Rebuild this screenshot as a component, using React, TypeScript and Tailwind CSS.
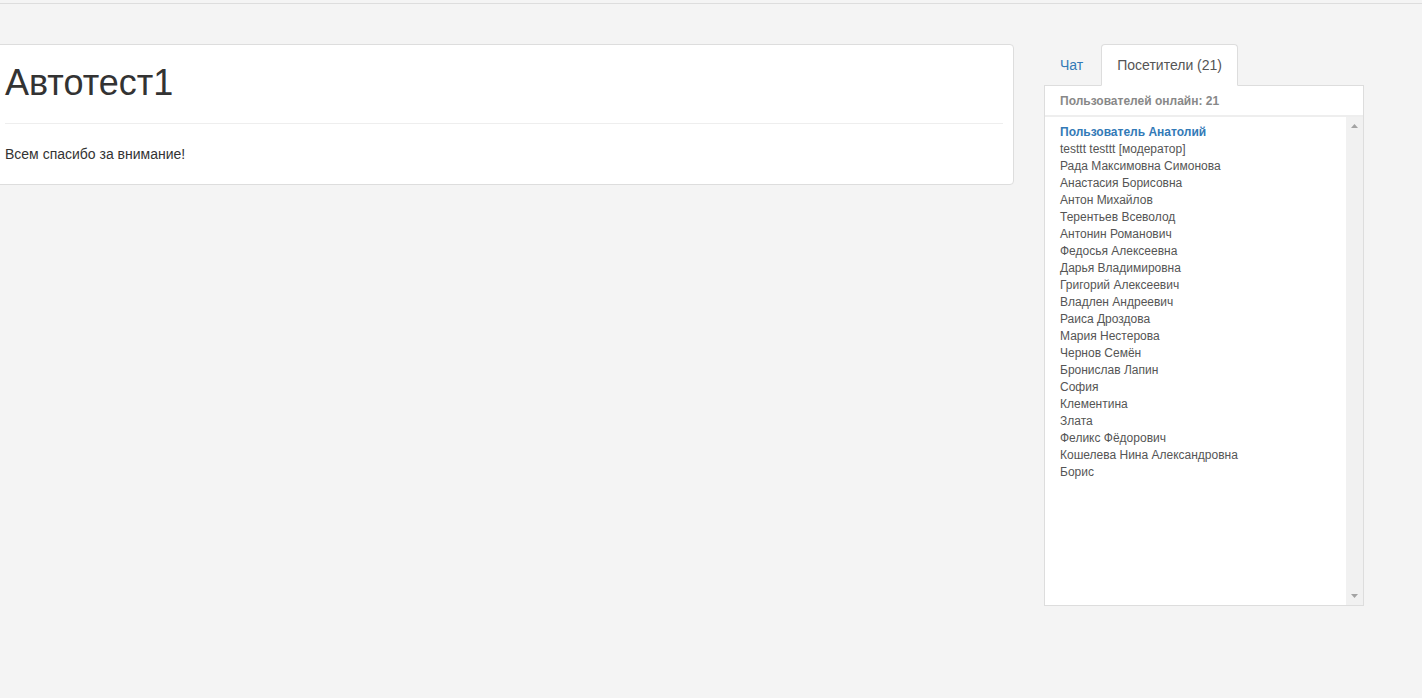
const visitors = [
  'testtt testtt [модератор]',
  'Рада Максимовна Симонова',
  'Анастасия Борисовна',
  'Антон Михайлов',
  'Терентьев Всеволод',
  'Антонин Романович',
  'Федосья Алексеевна',
  'Дарья Владимировна',
  'Григорий Алексеевич',
  'Владлен Андреевич',
  'Раиса Дроздова',
  'Мария Нестерова',
  'Чернов Семён',
  'Бронислав Лапин',
  'София',
  'Клементина',
  'Злата',
  'Феликс Фёдорович',
  'Кошелева Нина Александровна',
  'Борис',
];

export default function App() {
  return (
    <div className="min-h-[698px] bg-[#f4f4f4] overflow-hidden font-['Liberation_Sans',Arial,sans-serif] text-[#333]">
      <div className="h-[3px] bg-[#f4f4f4]" />
      <div className="border-t border-[#dddddd]" />

      <div className="flex items-start pt-[40px]">
        {/* Main block */}
        <div className="ml-[-6px] w-[1020px] shrink-0 bg-white border border-[#dddddd] rounded-[4px] px-[10px]">
          <h1 className="pt-[18px] text-[36px] leading-[1.1] font-normal text-[#333]">Автотест1</h1>
          <div className="mt-[20px] border-t border-[#eeeeee]" />
          <p className="mt-[20px] mb-[20px] text-[14px] leading-[20px]">Всем спасибо за внимание!</p>
        </div>

        {/* Sidebar */}
        <div className="ml-[30px] w-[320px] shrink-0">
          <div className="flex items-end text-[14px] leading-[20px] -mb-px relative z-10">
            <div className="px-[15px] py-[10px] border border-transparent text-[#337ab7] mr-[2px]">Чат</div>
            <div className="px-[15px] py-[10px] border border-[#dddddd] border-b-white bg-white rounded-t-[4px] text-[#555]">
              Посетители (21)
            </div>
          </div>
          <div className="h-[521px] border border-[#dddddd] bg-white flex flex-col">
            <div className="px-[15px] pt-[7px] pb-[5px] text-[12px] leading-[17px] font-bold text-[#888] border-b-2 border-[#eeeeee]">
              Пользователей онлайн: 21
            </div>
            <div className="flex-1 flex min-h-0">
              <ul className="flex-1 pl-[15px] pt-[7px] text-[12px] leading-[17px] text-[#555]">
                <li className="font-bold text-[#337ab7]">Пользователь Анатолий</li>
                {visitors.map((name) => (
                  <li key={name}>{name}</li>
                ))}
              </ul>
              <div className="w-[17px] bg-[#f1f1f1] flex flex-col items-center justify-between py-[7px]">
                <svg width="7" height="4" viewBox="0 0 7 4">
                  <path d="M3.5 0 L7 4 L0 4 Z" fill="#a3a3a3" />
                </svg>
                <svg width="7" height="4" viewBox="0 0 7 4">
                  <path d="M0 0 L7 0 L3.5 4 Z" fill="#a3a3a3" />
                </svg>
              </div>
            </div>
          </div>
        </div>
      </div>
    </div>
  );
}
